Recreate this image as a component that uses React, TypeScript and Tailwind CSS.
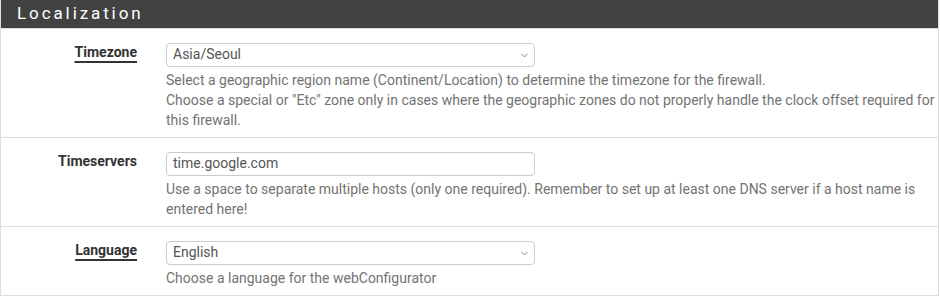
import { ChevronDown } from "lucide-react";

type Row = {
  label: string;
  underline?: boolean;
  kind: "select" | "input";
  value: string;
  help: string[];
};

const rows: Row[] = [
  {
    label: "Timezone",
    underline: true,
    kind: "select",
    value: "Asia/Seoul",
    help: [
      "Select a geographic region name (Continent/Location) to determine the timezone for the firewall.",
      'Choose a special or "Etc" zone only in cases where the geographic zones do not properly handle the clock offset required for this firewall.',
    ],
  },
  {
    label: "Timeservers",
    kind: "input",
    value: "time.google.com",
    help: [
      "Use a space to separate multiple hosts (only one required). Remember to set up at least one DNS server if a host name is entered here!",
    ],
  },
  {
    label: "Language",
    underline: true,
    kind: "select",
    value: "English",
    help: ["Choose a language for the webConfigurator"],
  },
];

export default function App() {
  return (
    <div className="w-[940px] h-[296px] bg-white font-['Roboto',sans-serif] text-[14px] text-[#333]">
      <div className="w-[939px] border border-[#ddd] border-t-0">
        <div className="h-[28px] bg-[#424242] px-[16px] flex items-center text-white text-[17px] tracking-[2.9px]">
          Localization
        </div>
        {rows.map((r, i) => (
          <div key={i} className="flex border-t border-[#ddd] pt-[14px] pb-[7px]">
            <div className="w-[150px] pr-[14px] flex justify-end -mt-[1px]">
              <span
                className={
                  r.underline
                    ? "font-bold underline decoration-2 underline-offset-[4px] leading-[20px]"
                    : "font-bold leading-[20px]"
                }
              >
                {r.label}
              </span>
            </div>
            <div className="flex-1 pl-[15px] pr-[2px]">
              <div className="w-[369px] h-[24px] rounded-[4px] border border-[#ccc] flex items-center justify-between pl-[6px] pr-[4px] text-[#555]">
                <span className="-mt-[1px]">{r.value}</span>
                {r.kind === "select" && <ChevronDown size={11} strokeWidth={2} className="text-[#777]" />}
              </div>
              <div className="mt-[3px] text-[#737373] leading-[20px]">
                {r.help.map((h, j) => (
                  <div key={j}>{h}</div>
                ))}
              </div>
            </div>
          </div>
        ))}
      </div>
    </div>
  );
}
